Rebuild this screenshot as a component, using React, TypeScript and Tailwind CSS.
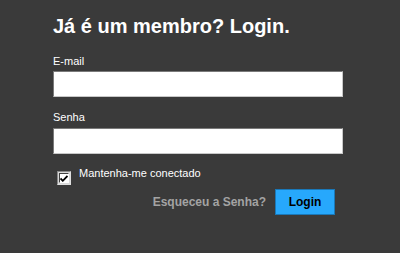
import React from "react";

export default function App() {
  return (
    <div
      className="w-[400px] h-[253px] bg-[#3a3a3a] pl-[53px] pt-[15px] overflow-hidden"
      style={{ fontFamily: '"Liberation Sans", Arial, sans-serif' }}
    >
      <h1 className="text-[20px] leading-[23px] font-bold text-white">Já é um membro? Login.</h1>
      <div className="mt-[17px] w-[290px]">
        <label className="block text-[11px] leading-[13px] text-white">E-mail</label>
        <div className="mt-[3px] h-[26px] bg-white border border-t-[#7a7a7a] border-l-[#7a7a7a] border-b-[#c8c8c8] border-r-[#c8c8c8]" />
        <label className="block mt-[14px] text-[11px] leading-[13px] text-white">Senha</label>
        <div className="mt-[4px] h-[26px] bg-white border border-t-[#7a7a7a] border-l-[#7a7a7a] border-b-[#c8c8c8] border-r-[#c8c8c8]" />
        <div className="mt-[13px] flex items-start">
          <div className="ml-[4px] mt-[4px] w-[14px] h-[14px] border border-t-[#8a8a8a] border-l-[#8a8a8a] border-b-[#e0e0e0] border-r-[#e0e0e0] bg-[#d8d8d8] p-[1px]">
            <div className="w-full h-full bg-white border border-t-[#404040] border-l-[#404040] border-b-white border-r-white flex items-center justify-center">
              <svg width="8" height="7" viewBox="0 0 8 7">
                <path d="M0.5 3.5 L2.8 5.8 L7.5 1" fill="none" stroke="#000" strokeWidth="1.8" />
              </svg>
            </div>
          </div>
          <span className="ml-[8px] text-[11px] leading-[13px] text-white">Mantenha-me conectado</span>
        </div>
        <div className="mt-[4px] pr-[8px] flex items-center justify-end">
          <span className="text-[12px] font-bold text-[#a3a3a3]">Esqueceu a Senha?</span>
          <button className="ml-[9px] w-[60px] h-[26px] bg-[#27a8fc] border border-[#1a78b8] text-[12px] font-bold text-black">
            Login
          </button>
        </div>
      </div>
    </div>
  );
}
